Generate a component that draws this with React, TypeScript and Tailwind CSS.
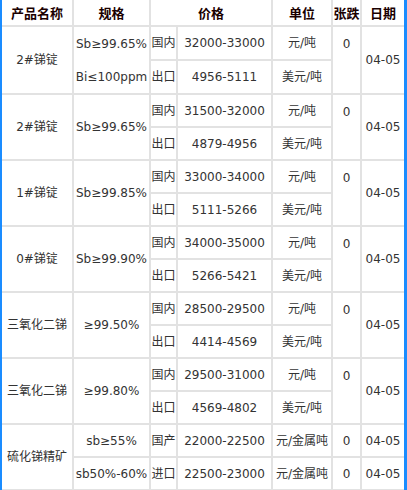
const groups = [
  { name: "2#锑锭", spec: ["Sb≥99.65%", "Bi≤100ppm"], cn: "32000-33000", ex: "4956-5111" },
  { name: "2#锑锭", spec: ["Sb≥99.65%"], cn: "31500-32000", ex: "4879-4956" },
  { name: "1#锑锭", spec: ["Sb≥99.85%"], cn: "33000-34000", ex: "5111-5266" },
  { name: "0#锑锭", spec: ["Sb≥99.90%"], cn: "34000-35000", ex: "5266-5421" },
  { name: "三氧化二锑", spec: ["≥99.50%"], cn: "28500-29500", ex: "4414-4569" },
  { name: "三氧化二锑", spec: ["≥99.80%"], cn: "29500-31000", ex: "4569-4802" },
];

const ore = [
  { spec: "sb≥55%", origin: "国产", price: "22000-22500" },
  { spec: "sb50%-60%", origin: "进口", price: "22500-23000" },
];

const td = "border-2 border-[#e2e2e2] p-0 text-center whitespace-nowrap";
const th = "border-2 border-[#e2e2e2] border-t-0 p-0 text-center font-bold text-[13px] text-[#1a0000]";

export default function App() {
  return (
    <div className="w-[407px] h-[490px] overflow-hidden bg-white border-l-2 border-r-[3px] border-[#1a8cff]">
      <table
        className="border-collapse table-fixed w-[402px] text-[12px] text-[#333] leading-none"
        style={{ fontFamily: '"DejaVu Sans", "Noto Sans CJK SC", sans-serif' }}
      >
        <colgroup>
          <col className="w-[71px]" />
          <col className="w-[77px]" />
          <col className="w-[27px]" />
          <col className="w-[95px]" />
          <col className="w-[60px]" />
          <col className="w-[29px]" />
          <col className="w-[43px]" />
        </colgroup>
        <thead>
          <tr className="h-[26px]" style={{ fontFamily: '"Noto Sans CJK SC", sans-serif' }}>
            <th className={`${th} border-l-0`}>产品名称</th>
            <th className={th}>规格</th>
            <th className={th} colSpan={2}>价格</th>
            <th className={th}>单位</th>
            <th className={th}>张跌</th>
            <th className={`${th} border-r-0`}>日期</th>
          </tr>
        </thead>
        <tbody>
          {groups.map((g, i) => (
            <Group key={i} {...g} />
          ))}
          {ore.map((r, i) => (
            <tr key={r.spec} className="h-[33px]">
              {i === 0 && (
                <td className={`${td} border-l-0`} rowSpan={2}>
                  硫化锑精矿
                </td>
              )}
              <td className={td}>{r.spec}</td>
              <td className={td}>{r.origin}</td>
              <td className={td}>{r.price}</td>
              <td className={td}>元/金属吨</td>
              <td className={td}>0</td>
              <td className={`${td} border-r-0`}>04-05</td>
            </tr>
          ))}
        </tbody>
      </table>
    </div>
  );
}

function Group({ name, spec, cn, ex }: { name: string; spec: string[]; cn: string; ex: string }) {
  return (
    <>
      <tr className="h-[33px]">
        <td className={`${td} border-l-0`} rowSpan={2}>
          {name}
        </td>
        <td className={td} rowSpan={2}>
          {spec.length > 1 ? (
            <div className="flex flex-col">
              {spec.map((s) => (
                <div key={s} className="h-[33px] flex items-center justify-center">
                  {s}
                </div>
              ))}
            </div>
          ) : (
            spec[0]
          )}
        </td>
        <td className={td}>国内</td>
        <td className={td}>{cn}</td>
        <td className={td}>元/吨</td>
        <td className={`${td} align-top pt-[11px]`} rowSpan={2}>
          0
        </td>
        <td className={`${td} border-r-0`} rowSpan={2}>
          04-05
        </td>
      </tr>
      <tr className="h-[33px]">
        <td className={td}>出口</td>
        <td className={td}>{ex}</td>
        <td className={td}>美元/吨</td>
      </tr>
    </>
  );
}
